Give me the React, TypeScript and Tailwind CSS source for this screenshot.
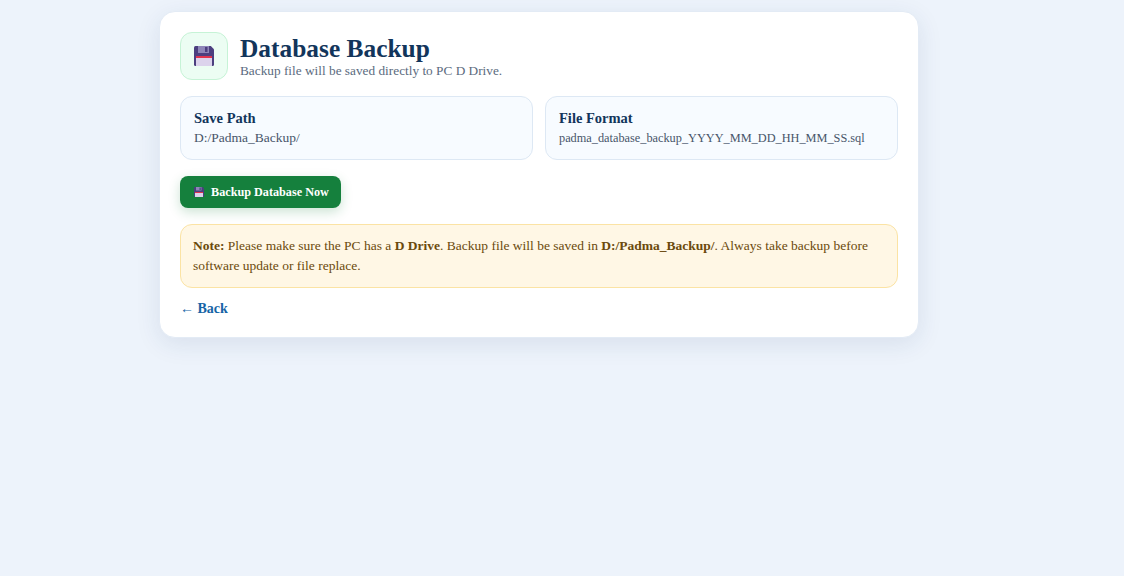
import React from "react";

function Floppy({ size = 24 }: { size?: number }) {
  return (
    <svg width={size} height={size} viewBox="0 0 24 24">
      <path d="M2 3.5A1.5 1.5 0 0 1 3.5 2h15.3L22 5.2v15.3a1.5 1.5 0 0 1-1.5 1.5h-17A1.5 1.5 0 0 1 2 20.5z" fill="#4c3f7f" />
      <rect x="6" y="2" width="11" height="7" fill="#8e86b8" />
      <rect x="13" y="3" width="2.5" height="5" fill="#4c3f7f" />
      <rect x="4" y="12" width="16" height="10" rx="0.5" fill="#dcd3ec" />
      <rect x="4" y="12" width="16" height="2" fill="#e0344f" />
    </svg>
  );
}

export default function App() {
  return (
    <div
      className="min-h-[576px] w-full bg-[#edf3fb] pt-[11px]"
      style={{ fontFamily: '"Liberation Serif", serif' }}
    >
      <div className="ml-[159px] w-[760px] rounded-2xl border border-[#e3ebf5] bg-white px-5 pt-5 pb-5 shadow-[0_6px_24px_rgba(30,60,110,0.10)]">
        <div className="flex items-center gap-3">
          <div className="flex h-12 w-12 items-center justify-center rounded-xl border border-[#c6f3d6] bg-[#ecfdf3]">
            <Floppy size={24} />
          </div>
          <div className="flex flex-col">
            <h1 className="text-[25.4px] font-bold leading-[30px] text-[#12355b]">Database Backup</h1>
            <p className="text-[13.3px] leading-[16px] text-[#5b6b7e]">Backup file will be saved directly to PC D Drive.</p>
          </div>
        </div>

        <div className="mt-4 grid grid-cols-2 gap-3">
          <div className="rounded-xl border border-[#dde8f4] bg-[#f7fbff] px-[13px] py-[11px]">
            <div className="text-[14.5px] font-bold leading-5 text-[#12355b]">Save Path</div>
            <div className="text-[13.5px] leading-5 text-[#475569]">D:/Padma_Backup/</div>
          </div>
          <div className="rounded-xl border border-[#dde8f4] bg-[#f7fbff] px-[13px] py-[11px]">
            <div className="text-[14.5px] font-bold leading-5 text-[#12355b]">File Format</div>
            <div className="text-[12.3px] leading-5 text-[#475569]">padma_database_backup_YYYY_MM_DD_HH_MM_SS.sql</div>
          </div>
        </div>

        <div className="mt-4 flex">
          <button className="flex h-8 items-center gap-1.5 rounded-lg bg-[#15803d] pl-[13px] pr-3 text-[12.2px] font-bold text-white shadow-[0_4px_12px_rgba(21,128,61,0.22)]">
            <Floppy size={12} />
            Backup Database Now
          </button>
        </div>

        <div className="mt-4 rounded-xl border border-[#fbe3a4] bg-[#fff7e5] px-3 py-[11px] text-[13.5px] leading-5 text-[#6b4a0c]">
          <span className="font-bold">Note:</span> Please make sure the PC has a{" "}
          <span className="font-bold">D Drive</span>. Backup file will be saved in{" "}
          <span className="font-bold">D:/Padma_Backup/</span>. Always take backup before software update or file replace.
        </div>

        <div className="mt-3 flex leading-[17px]">
          <a className="text-[14px] font-bold leading-[17px] text-[#1664a6]" href="#">
            ← Back
          </a>
        </div>
      </div>
    </div>
  );
}
